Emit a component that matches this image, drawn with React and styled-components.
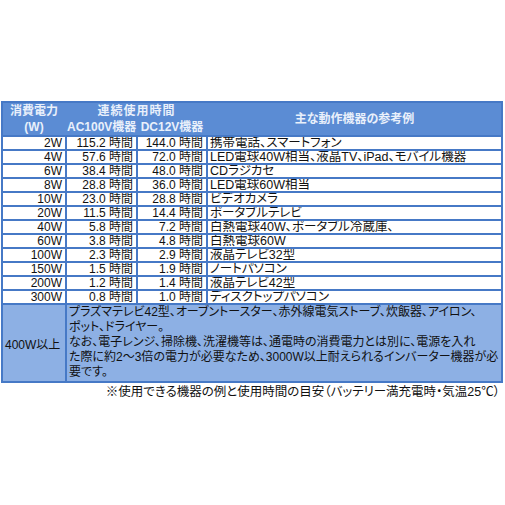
import React from "react";
import styled, { createGlobalStyle } from "styled-components";

const Global = createGlobalStyle`
  html, body { margin: 0; padding: 0; background: #fff; }
  body {
    font-family: "Liberation Sans", "Noto Sans CJK JP", sans-serif;
    font-size: 12px;
    color: #111;
    font-feature-settings: "palt";
  }
`;

const Page = styled.div`
  width: 505px;
  padding: 101px 2px 0 1px;
  box-sizing: border-box;
`;

const Frame = styled.div`
  width: 502px;
  box-sizing: border-box;
  background: #4679c6;
  padding: 2px;
  display: flex;
  flex-direction: column;
  gap: 2px;
`;

const Header = styled.div`
  display: grid;
  grid-template-columns: 62px 69px 68px 1fr;
  grid-template-rows: 16px 16px;
  column-gap: 2px;
  background: #5b8cd4;
  color: #e9f0fb;
  font-weight: bold;
  line-height: 16px;
`;

const HeadCell = styled.div`
  text-align: center;
  white-space: nowrap;
  grid-column: ${(p) => p.$col || "auto"};
  grid-row: ${(p) => p.$row || "auto"};
  align-self: center;
  letter-spacing: ${(p) => (p.$wide ? "1px" : "0")};
`;

const Body = styled.div`
  display: grid;
  grid-template-columns: 62px 69px 68px 1fr;
  gap: 2px;
`;

const Cell = styled.div`
  background: #fff;
  height: 12px;
  line-height: 12px;
  white-space: nowrap;
  overflow: hidden;
  text-align: ${(p) => (p.$left ? "left" : "right")};
  padding: ${(p) => (p.$left ? "0 0 0 2px" : "0 3px 0 0")};
  font-size: ${(p) => (p.$left ? "12.5px" : "12px")};
`;

const Extra = styled.div`
  display: grid;
  grid-template-columns: 62px 1fr;
  gap: 2px;
  height: 76px;
`;

const ExtraLabel = styled.div`
  background: #8db0e4;
  display: flex;
  align-items: center;
  padding-left: 2px;
`;

const ExtraText = styled.div`
  background: #8db0e4;
  font-size: 12px;
  line-height: 15px;
  padding: 0 0 0 2px;
  white-space: nowrap;
`;

const Note = styled.div`
  width: 502px;
  text-align: right;
  font-size: 12.5px;
  line-height: 18px;
  padding-right: 3px;
  box-sizing: border-box;
`;

const rows = [
  ["2W", "115.2", "144.0", "携帯電話、スマートフォン"],
  ["4W", "57.6", "72.0", "LED電球40W相当、液晶TV、iPad、モバイル機器"],
  ["6W", "38.4", "48.0", "CDラジカセ"],
  ["8W", "28.8", "36.0", "LED電球60W相当"],
  ["10W", "23.0", "28.8", "ビデオカメラ"],
  ["20W", "11.5", "14.4", "ポータブルテレビ"],
  ["40W", "5.8", "7.2", "白熱電球40W、ポータブル冷蔵庫、"],
  ["60W", "3.8", "4.8", "白熱電球60W"],
  ["100W", "2.3", "2.9", "液晶テレビ32型"],
  ["150W", "1.5", "1.9", "ノートパソコン"],
  ["200W", "1.2", "1.4", "液晶テレビ42型"],
  ["300W", "0.8", "1.0", "ディスクトップパソコン"],
];

export default function App() {
  return (
    <>
      <Global />
      <Page>
        <Frame>
          <Header>
            <HeadCell $col="1" $row="1">消費電力</HeadCell>
            <HeadCell $col="2 / span 2" $row="1" $wide>連続使用時間</HeadCell>
            <HeadCell $col="4" $row="1 / span 2">主な動作機器の参考例</HeadCell>
            <HeadCell $col="1" $row="2">(W)</HeadCell>
            <HeadCell $col="2" $row="2">AC100V機器</HeadCell>
            <HeadCell $col="3" $row="2">DC12V機器</HeadCell>
          </Header>
          <Body>
            {rows.map(([w, ac, dc, ex]) => (
              <React.Fragment key={w}>
                <Cell>{w}</Cell>
                <Cell>{ac} 時間</Cell>
                <Cell>{dc} 時間</Cell>
                <Cell $left>{ex}</Cell>
              </React.Fragment>
            ))}
          </Body>
          <Extra>
            <ExtraLabel>400W以上</ExtraLabel>
            <ExtraText>
              プラズマテレビ42型、オーブントースター、赤外線電気ストーブ、炊飯器、アイロン、
              <br />
              ポット、ドライヤー。
              <br />
              なお、電子レンジ、掃除機、洗濯機等は、通電時の消費電力とは別に、電源を入れ
              <br />
              た際に約2～3倍の電力が必要なため、3000W以上耐えられるインバーター機器が必
              <br />
              要です。
            </ExtraText>
          </Extra>
        </Frame>
        <Note>※使用できる機器の例と使用時間の目安（バッテリー満充電時・気温25℃）</Note>
      </Page>
    </>
  );
}
